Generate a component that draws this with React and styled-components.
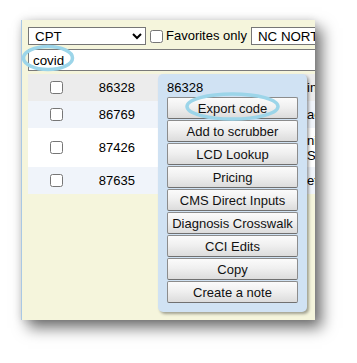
import React from "react";
import styled, { createGlobalStyle } from "styled-components";

const GlobalStyle = createGlobalStyle`
  html, body { margin: 0; padding: 0; background: #ffffff; }
  body { font-family: "Liberation Sans", Arial, sans-serif; }
  * { box-sizing: border-box; }
`;

const Stage = styled.div`
  width: 357px;
  height: 363px;
  padding: 20px 0 0 21px;
  background: #ffffff;
`;

const Frame = styled.div`
  position: relative;
  width: 294px;
  height: 300px;
  overflow: hidden;
  background: #f5f5dc;
  border-left: 1px solid #a9c8e4;
  padding: 7px 0 0 6px;
  font: 13px "Liberation Sans", Arial, sans-serif;
  color: #000;
  box-shadow: 0 0 8px rgba(0, 0, 0, 0.12), 7px 8px 14px rgba(0, 0, 0, 0.55);
`;

const TopBar = styled.div`
  display: flex;
  align-items: center;
  width: max-content;
  height: 18px;
  white-space: nowrap;
`;

const TypeSelect = styled.select`
  width: ${(p) => p.$w}px;
  height: 18px;
  margin: 0;
  padding: 0 0 0 2px;
  font: 13.33px "Liberation Sans", Arial, sans-serif;
  color: #000;
  background: #fff;
  border: 1px solid #767676;
  border-radius: 0;
  flex-shrink: 0;
  margin-left: ${(p) => p.$ml || 0}px;
`;

const Check = styled.input.attrs({ type: "checkbox" })`
  width: 13px;
  height: 13px;
  margin: ${(p) => p.$m || "0 3px 0 4px"};
  flex-shrink: 0;
`;

const FavLabel = styled.label`
  font-size: 13px;
  line-height: 16px;
`;

const Search = styled.input`
  display: block;
  width: 330px;
  height: 22px;
  margin-top: 4px;
  padding: 0 4px;
  font: 13.33px "Liberation Sans", Arial, sans-serif;
  color: #000;
  background: #fff;
  border: 1px solid #7a7a7a;
  border-radius: 0;
  outline: none;
`;

const Table = styled.div`
  margin-top: 3px;
  width: 340px;
`;

const Row = styled.div`
  display: grid;
  grid-template-columns: 56px 56px 167px 1fr;
  align-items: center;
  background: ${(p) => p.$bg};
  padding: 4.5px 0;
`;

const CheckCell = styled.div`
  height: 18px;
  display: flex;
  align-items: center;
  justify-content: center;
`;

const CodeCell = styled.div`
  text-align: right;
  padding-right: 5px;
  line-height: 15px;
`;

const DescCell = styled.div`
  line-height: 15px;
  white-space: nowrap;
`;

const Popup = styled.div`
  position: absolute;
  left: 136px;
  top: 54px;
  width: 149px;
  height: 238px;
  padding: 6px 9px 9px 9px;
  background: #d0e2f3;
  border-radius: 5px;
  box-shadow: 2px 2px 3px rgba(0, 0, 0, 0.35);
`;

const PopupTitle = styled.div`
  line-height: 16px;
  padding-left: 0;
  font-size: 13px;
`;

const MenuButton = styled.button`
  display: block;
  width: 100%;
  height: 22px;
  margin: 1px 0 0 0;
  padding: 0 4px;
  font: 13px "Liberation Sans", Arial, sans-serif;
  color: #111;
  background: linear-gradient(#fbfbfb, #f0f0f0 45%, #dcdcdc);
  border: 1px solid #8c8c8c;
  border-bottom-color: #707070;
  border-radius: 2px;
  white-space: nowrap;
`;

const Marks = styled.svg`
  position: absolute;
  left: 0;
  top: 0;
  width: 294px;
  height: 300px;
  pointer-events: none;
`;

const rows = [
  { code: "86328", bg: "#ececec", desc: ["in"] },
  { code: "86769", bg: "#f0f4fa", desc: ["ac"] },
  { code: "87426", bg: "#ffffff", desc: ["ni", "S-"] },
  { code: "87635", bg: "#f0f4fa", desc: ["et"] },
];

const actions = [
  "Export code",
  "Add to scrubber",
  "LCD Lookup",
  "Pricing",
  "CMS Direct Inputs",
  "Diagnosis Crosswalk",
  "CCI Edits",
  "Copy",
  "Create a note",
];

export default function App() {
  return (
    <>
      <GlobalStyle />
      <Stage>
        <Frame>
          <TopBar>
            <TypeSelect $w={118} defaultValue="CPT">
              <option>CPT</option>
              <option>HCPCS</option>
              <option>ICD-10</option>
            </TypeSelect>
            <Check id="fav" />
            <FavLabel htmlFor="fav">Favorites only</FavLabel>
            <TypeSelect $w={140} $ml={4} defaultValue="nc">
              <option value="nc">NC NORTH CAROLINA</option>
            </TypeSelect>
          </TopBar>
          <Search defaultValue="covid" />
          <Table>
            {rows.map((r) => (
              <Row key={r.code} $bg={r.bg}>
                <CheckCell>
                  <Check $m="0" />
                </CheckCell>
                <CodeCell>{r.code}</CodeCell>
                <div />
                <DescCell>
                  {r.desc.map((d, i) => (
                    <div key={i}>{d}</div>
                  ))}
                </DescCell>
              </Row>
            ))}
          </Table>
          <Popup>
            <PopupTitle>86328</PopupTitle>
            {actions.map((a) => (
              <MenuButton key={a}>{a}</MenuButton>
            ))}
          </Popup>
          <Marks viewBox="0 0 294 300">
            <ellipse cx="26" cy="38" rx="24.5" ry="11.5" fill="none" stroke="#9cd5e9" strokeWidth="3.5" />
            <ellipse cx="210.5" cy="86.5" rx="45.5" ry="12.5" fill="none" stroke="#9cd5e9" strokeWidth="3.5" />
          </Marks>
        </Frame>
      </Stage>
    </>
  );
}
